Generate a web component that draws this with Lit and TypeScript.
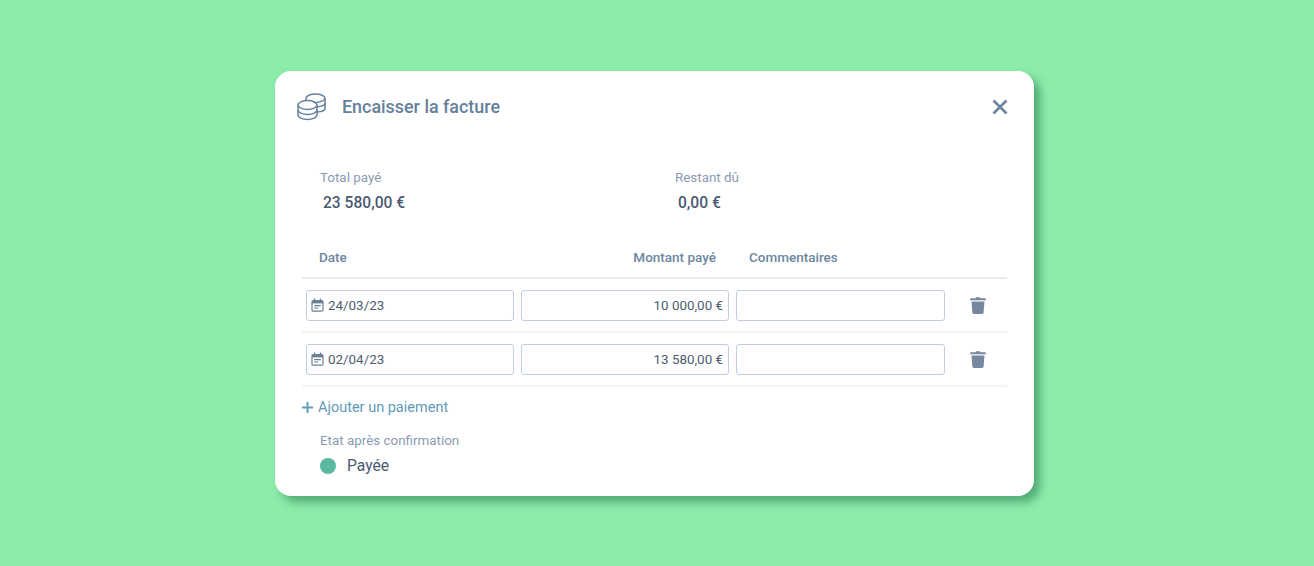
import { LitElement, html, css } from 'lit';
import { customElement } from 'lit/decorators.js';

const payments = [
  { date: '24/03/23', amount: '10 000,00 €' },
  { date: '02/04/23', amount: '13 580,00 €' },
];

@customElement('app-root')
export class AppRoot extends LitElement {
  static styles = css`
    :host {
      display: block;
      height: 566px;
      background: #8cecaa;
      font-family: Roboto, 'Liberation Sans', sans-serif;
      overflow: hidden;
    }

    .page {
      display: flex;
      padding: 71px 0 0 275px;
    }

    .card {
      box-sizing: border-box;
      width: 759px;
      height: 425px;
      background: #fff;
      border-radius: 16px;
      box-shadow: 6px 6px 8px rgba(45, 130, 85, 0.62);
      padding: 0 27px;
    }

    .header {
      display: flex;
      align-items: center;
      height: 72px;
      margin-left: -5px;
    }

    .coins {
      width: 30px;
      height: 28px;
      margin: -1px 15px 0 0;
      flex: none;
    }

    .title {
      font-size: 17.9px;
      font-weight: 500;
      color: #64809c;
      flex: 1;
      margin-top: -2px;
    }

    .close {
      width: 18px;
      height: 18px;
      margin-right: -2px;
    }

    .stats {
      display: flex;
      padding: 27px 0 0 18px;
    }

    .stat {
      flex: none;
      width: 355px;
    }

    .label {
      font-size: 13.4px;
      line-height: 16px;
      color: #8a9ab0;
    }

    .value {
      margin: 8px 0 0 3px;
      font-size: 15.6px;
      line-height: 18px;
      font-weight: 500;
      color: #4a5a70;
    }

    .thead {
      display: grid;
      grid-template-columns: 208px 208px 209px;
      column-gap: 7px;
      padding: 0 4px 4px;
      margin-top: 28px;
      height: 33px;
      align-items: center;
      border-bottom: 2px solid #e6ebf2;
      font-size: 13.5px;
      font-weight: 500;
      color: #6d86a0;
    }

    .thead .date {
      padding-left: 13px;
    }

    .thead .amount {
      text-align: right;
      padding-right: 13px;
    }

    .thead .comment {
      padding-left: 13px;
    }

    .row {
      display: grid;
      grid-template-columns: 208px 208px 209px 1fr;
      column-gap: 7px;
      align-items: center;
      padding: 0 4px;
      height: 52px;
      border-bottom: 2px solid #f3f4f6;
    }

    .field {
      box-sizing: border-box;
      height: 31px;
      border: 1px solid #c0cee0;
      border-radius: 3px;
      display: flex;
      align-items: center;
      padding: 0 5px 0 4px;
      font-size: 13.4px;
      color: #4f5d70;
    }

    .field.right {
      justify-content: flex-end;
    }

    .cal {
      width: 13px;
      height: 14px;
      margin-right: 4px;
      flex: none;
    }

    .trash-cell {
      display: flex;
      padding-left: 18px;
    }

    .trash {
      width: 16px;
      height: 17px;
    }

    .add {
      display: flex;
      align-items: center;
      margin-top: 11px;
      height: 18px;
      font-size: 14.5px;
      color: #5f9ab8;
    }

    .plus {
      width: 11px;
      height: 11px;
      margin-right: 5px;
    }

    .state {
      padding: 17px 0 0 18px;
    }

    .status {
      display: flex;
      align-items: center;
      margin-top: 8px;
      font-size: 15.7px;
      line-height: 18px;
      color: #4a5a70;
    }

    .dot {
      width: 16px;
      height: 16px;
      border-radius: 50%;
      background: #5cb8a0;
      margin-right: 11px;
    }
  `;

  private renderCoins() {
    return html`<svg class="coins" viewBox="0 0 30 28" fill="none" stroke="#64809c" stroke-width="1.5">
      <ellipse cx="10.5" cy="12" rx="9.500" ry="4.500" />
      <path d="M1 12v10c0 2.500 4.200 4.500 9.500 4.500S20 24.500 20 22V12" />
      <path d="M1 17C1 19.500 5.200 21.500 10.500 21.500S20 19.500 20 17" />
      <path d="M9 7.500V5.200C9 2.900 13.500 1 18.500 1S28 2.900 28 5.200s-4.500 4.200-9.500 4.200c-.7 0-1.300 0-2-.1" />
      <path d="M28 5.200v10.300c0 1.700-3 3.200-8 3.500" />
      <path d="M28 10.300c0 1.700-3 3.200-8 3.500" />
    </svg>`;
  }

  private renderCalendar() {
    return html`<svg class="cal" viewBox="0 0 13 14" fill="none" stroke="#6b7f96" stroke-width="1.2">
      <rect x="1" y="2.600" width="11" height="10.600" rx="1.200" />
      <path d="M1 4.200h11" stroke-width="2.400" />
      <path d="M3.600.6v2.400M9.400.6v2.400" />
      <path d="M3.200 7.600h6.600M3.200 10h4.200" stroke-width="1.100" />
    </svg>`;
  }

  private renderTrash() {
    return html`<svg class="trash" viewBox="0 0 16 17" fill="#76879f">
      <path d="M5.600 1.200 6.200.2h3.600l.6 1H15c.5 0 .9.4.9.9v1.200H.1V2.100c0-.5.4-.9.9-.9z" />
      <path d="M1.500 4.400h13l-.9 11.200c-.1.8-.7 1.400-1.500 1.400H3.900c-.8 0-1.400-.6-1.500-1.400z" />
    </svg>`;
  }

  render() {
    return html`
      <div class="page">
        <section class="card">
          <header class="header">
            ${this.renderCoins()}
            <div class="title">Encaisser la facture</div>
            <svg class="close" viewBox="0 0 18 18" fill="none" stroke="#6f86a0" stroke-width="2.800">
              <path d="M2.500 2.500l13 13M15.500 2.500l-13 13" />
            </svg>
          </header>

          <div class="stats">
            <div class="stat">
              <div class="label">Total payé</div>
              <div class="value">23 580,00 €</div>
            </div>
            <div class="stat">
              <div class="label">Restant dû</div>
              <div class="value">0,00 €</div>
            </div>
          </div>

          <div class="thead">
            <div class="date">Date</div>
            <div class="amount">Montant payé</div>
            <div class="comment">Commentaires</div>
          </div>

          ${payments.map(
            (p) => html`
              <div class="row">
                <div class="field">${this.renderCalendar()}${p.date}</div>
                <div class="field right">${p.amount}</div>
                <div class="field"></div>
                <div class="trash-cell">${this.renderTrash()}</div>
              </div>
            `
          )}

          <div class="add">
            <svg class="plus" viewBox="0 0 11 11" fill="none" stroke="#5f9ab8" stroke-width="2">
              <path d="M5.500 0v11M0 5.500h11" />
            </svg>
            Ajouter un paiement
          </div>

          <div class="state">
            <div class="label">Etat après confirmation</div>
            <div class="status"><span class="dot"></span>Payée</div>
          </div>
        </section>
      </div>
    `;
  }
}
